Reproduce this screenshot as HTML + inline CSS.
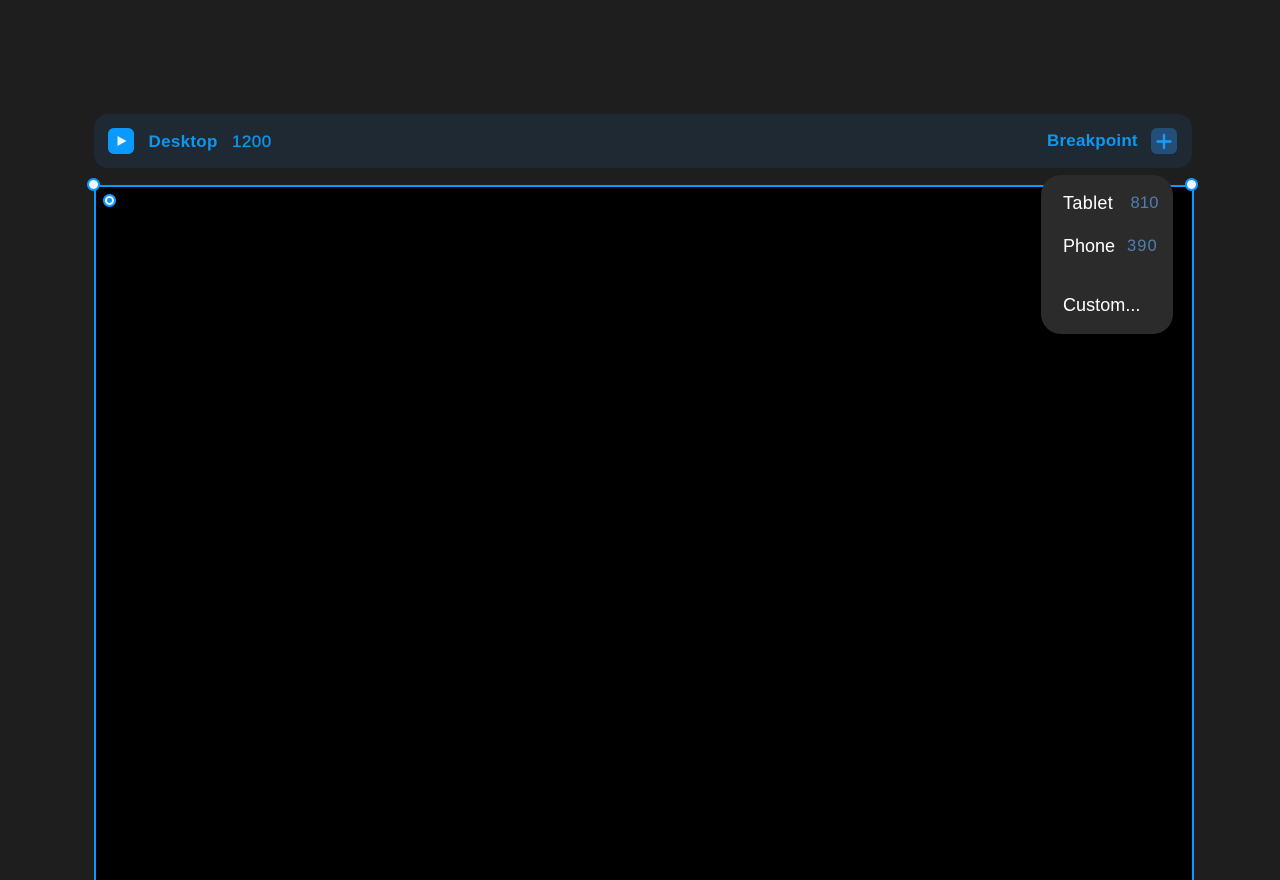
<!DOCTYPE html>
<html lang="en">
<head>
<meta charset="utf-8">
<title>Breakpoints</title>
<style>
html,body{margin:0;padding:0;background:#1e1e1e;width:1280px;height:880px;overflow:hidden;}
body{position:relative;font-family:"Liberation Sans",sans-serif;}
div,span,svg{position:absolute;box-sizing:border-box;}
#root{left:0;top:0;width:1280px;height:880px;overflow:hidden;}
.t{white-space:nowrap;line-height:20px;height:20px;}
.blue{color:#0f96ee;font-weight:700;font-size:17px;}
.w{color:#fff;font-size:18px;}
.n{color:#4f7fae;font-size:16.5px;}
.h{width:13px;height:13px;border-radius:50%;background:#f2f5f8;border:2px solid #0a99ff;}
</style>
</head>
<body>
<div id="root">
<div style="left:94px;top:114px;width:1098px;height:54px;background:#1f2933;border-radius:14px;"></div>
<div style="left:108px;top:128px;width:26px;height:26px;background:#0a99ff;border-radius:6px;"></div>
<svg style="left:108px;top:128px;" width="26" height="26" viewBox="0 0 26 26"><path d="M9.500 8 L18.500 13 L9.500 18 Z" fill="#e8f4ff"/></svg>
<div class="t blue" style="left:148.500px;top:131.500px;letter-spacing:.3px;">Desktop</div>
<div class="t blue" style="left:232px;top:131.500px;letter-spacing:.45px;font-weight:400;-webkit-text-stroke:.3px #0f96ee;">1200</div>
<div class="t blue" style="left:1047px;top:131px;letter-spacing:.2px;">Breakpoint</div>
<div style="left:1151px;top:128px;width:26px;height:26px;background:#234e77;border-radius:6px;"></div>
<svg style="left:1151px;top:128px;" width="26" height="26" viewBox="0 0 26 26"><path d="M13 7V20M6.500 13.500H19.500" stroke="#1a9bf5" stroke-width="2.400" stroke-linecap="round"/></svg>

<div style="left:94px;top:185px;width:1100px;height:695px;background:#000;border:2px solid #0a99ff;border-bottom:none;"></div>
<div class="h" style="left:87px;top:178px;"></div>
<div class="h" style="left:1185px;top:178px;"></div>
<div style="left:103px;top:194px;width:13px;height:13px;border-radius:50%;background:#f2f5f8;border:2px solid #0a99ff;"></div>
<div style="left:107px;top:198px;width:5px;height:5px;border-radius:50% 50% 60% 60%;background:#0a99ff;"></div>

<div style="left:1041px;top:175px;width:132px;height:159px;background:#2b2b2b;border-radius:20px;"></div>
<div class="t w" style="left:1063px;top:193px;letter-spacing:.35px;">Tablet</div>
<div class="t n" style="left:1130.500px;top:193px;letter-spacing:.2px;">810</div>
<div class="t w" style="left:1063px;top:236px;letter-spacing:0;">Phone</div>
<div class="t n" style="left:1127px;top:236px;letter-spacing:1.100px;">390</div>
<div class="t w" style="left:1063px;top:295px;letter-spacing:.05px;">Custom...</div>
</div>
</body>
</html>
